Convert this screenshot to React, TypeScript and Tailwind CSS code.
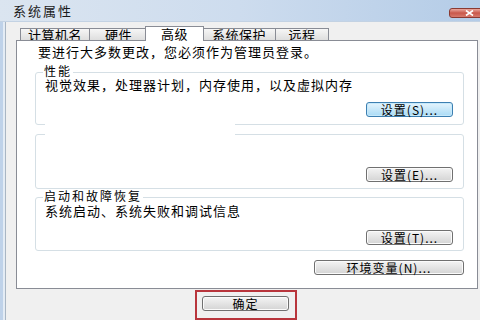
import React from "react";

function Btn({ label, focused, className = "" }: { label: string; focused?: boolean; className?: string }) {
  return (
    <div
      className={`h-[15px] flex items-center justify-center rounded-[3px] border text-[12px] leading-none tracking-[1px] text-black ${
        focused
          ? "border-[#3c7fb1] bg-gradient-to-b from-[#e5f4fc] to-[#a9dbf6] shadow-[inset_0_0_0_1px_#c6e9fb]"
          : "border-[#707070] bg-gradient-to-b from-[#f4f4f4] to-[#d4d4d4] shadow-[inset_0_0_0_1px_#fbfbfb]"
      } ${className}`}
    >
      {label}
    </div>
  );
}

function Tab({ label, className = "" }: { label: string; className?: string }) {
  return (
    <div
      className={`h-[12px] flex items-center justify-center border-t border-l border-[#898c95] bg-gradient-to-b from-[#f6f6f6] to-[#dedede] text-[13px] leading-[12px] tracking-[0.5px] text-black ${className}`}
    >
      {label}
    </div>
  );
}

export default function App() {
  return (
    <div className="w-[480px] h-[320px] overflow-hidden relative bg-[#f0f0f0] font-['Noto_Sans_CJK_SC','Noto_Sans',sans-serif] text-black">
      {/* title bar */}
      <div className="h-[22px] flex items-center pl-[13px] bg-gradient-to-r from-[#dbe5f0] via-[#cddcee] to-[#b4cce7] border-b border-[#c3d2e3]">
        <span className="text-[13px] leading-[14px] tracking-[2px] text-[#1a1a1a]">系统属性</span>
      </div>
      <div className="absolute top-[8px] left-[449px] w-[40px] h-[10px] rounded-[3px] border border-[#8a3a32] bg-gradient-to-b from-[#e9a89f] via-[#c9584b] to-[#d77a6d] flex items-center pl-[15px]">
        <svg width="9" height="6" viewBox="0 0 9 6">
          <path d="M1 0.5 L8 5.5 M8 0.5 L1 5.5" stroke="#ffffff" strokeWidth="1.6" />
        </svg>
      </div>

      <div className="flex h-[298px]">
        {/* left frame */}
        <div className="w-[3px] bg-[#bfd2e9]" />
        <div className="w-[2px] bg-[#e4ecf5]" />
        <div className="w-[1px] bg-[#a9b6c4]" />
        {/* client */}
        <div className="flex-1 flex flex-col pl-[10px] pt-[4px]">
          {/* tabs */}
          <div className="flex items-end h-[14px] pl-[4px]">
            <Tab label="计算机名" className="w-[69px]" />
            <Tab label="硬件" className="w-[58px]" />
            <div className="relative z-10 -mx-[2px] -mb-[1px] w-[59px] h-[15px] flex items-center justify-center border-t border-l border-r border-[#898c95] bg-white text-[13px] leading-[12px] tracking-[0.5px]">
              高级
            </div>
            <Tab label="系统保护" className="w-[73px]" />
            <Tab label="远程" className="w-[54px] border-r" />
          </div>
          {/* panel */}
          <div className="relative w-[462px] h-[253px] border border-[#898c95] bg-white pl-[18px] pt-[4px]">
            <div className="w-[429px] flex flex-col">
              <div className="pl-[3px] text-[13px] leading-[14px] tracking-[1px]">要进行大多数更改，您必须作为管理员登录。</div>

              {/* group 1 */}
              <div className="relative mt-[13px] h-[53px] border border-[#d5dfe5] rounded-[3px] flex flex-col justify-between pt-[6px] pb-[7px]">
                <span className="absolute left-[7px] -top-[8px] px-[1px] bg-white text-[12px] leading-[12px] tracking-[2px]">性能</span>
                <div className="pl-[9px] text-[13px] leading-[12px] tracking-[1px]">视觉效果，处理器计划，内存使用，以及虚拟内存</div>
                <Btn label="设置(S)..." focused className="self-end mr-[10px] w-[87px]" />
              </div>

              {/* group 2 */}
              <div className="relative mt-[9px] h-[55px] border border-[#d5dfe5] rounded-[3px] flex flex-col justify-end pb-[6px]">
                <Btn label="设置(E)..." className="self-end mr-[10px] w-[87px]" />
              </div>

              {/* group 3 */}
              <div className="relative mt-[8px] h-[54px] border border-[#d5dfe5] rounded-[3px] flex flex-col justify-between pt-[7px] pb-[5px]">
                <span className="absolute left-[7px] -top-[8px] px-[1px] bg-white text-[12px] leading-[12px] tracking-[2px]">启动和故障恢复</span>
                <div className="pl-[9px] text-[13px] leading-[12px] tracking-[1px]">系统启动、系统失败和调试信息</div>
                <Btn label="设置(T)..." className="self-end mr-[10px] w-[87px]" />
              </div>

              <Btn label="环境变量(N)..." className="self-end mt-[9px] w-[150px]" />
            </div>
            {/* erased patch */}
            <div className="absolute left-[28px] top-[79px] w-[190px] h-[19px] bg-white" />
          </div>

          {/* bottom */}
          <div className="mt-[1px] ml-[179px] w-[102px] h-[30px] border-2 border-[#b8353c] pt-[4px] pl-[5px]">
            <Btn label="确定" className="w-[87px]" />
          </div>
        </div>
      </div>
    </div>
  );
}
